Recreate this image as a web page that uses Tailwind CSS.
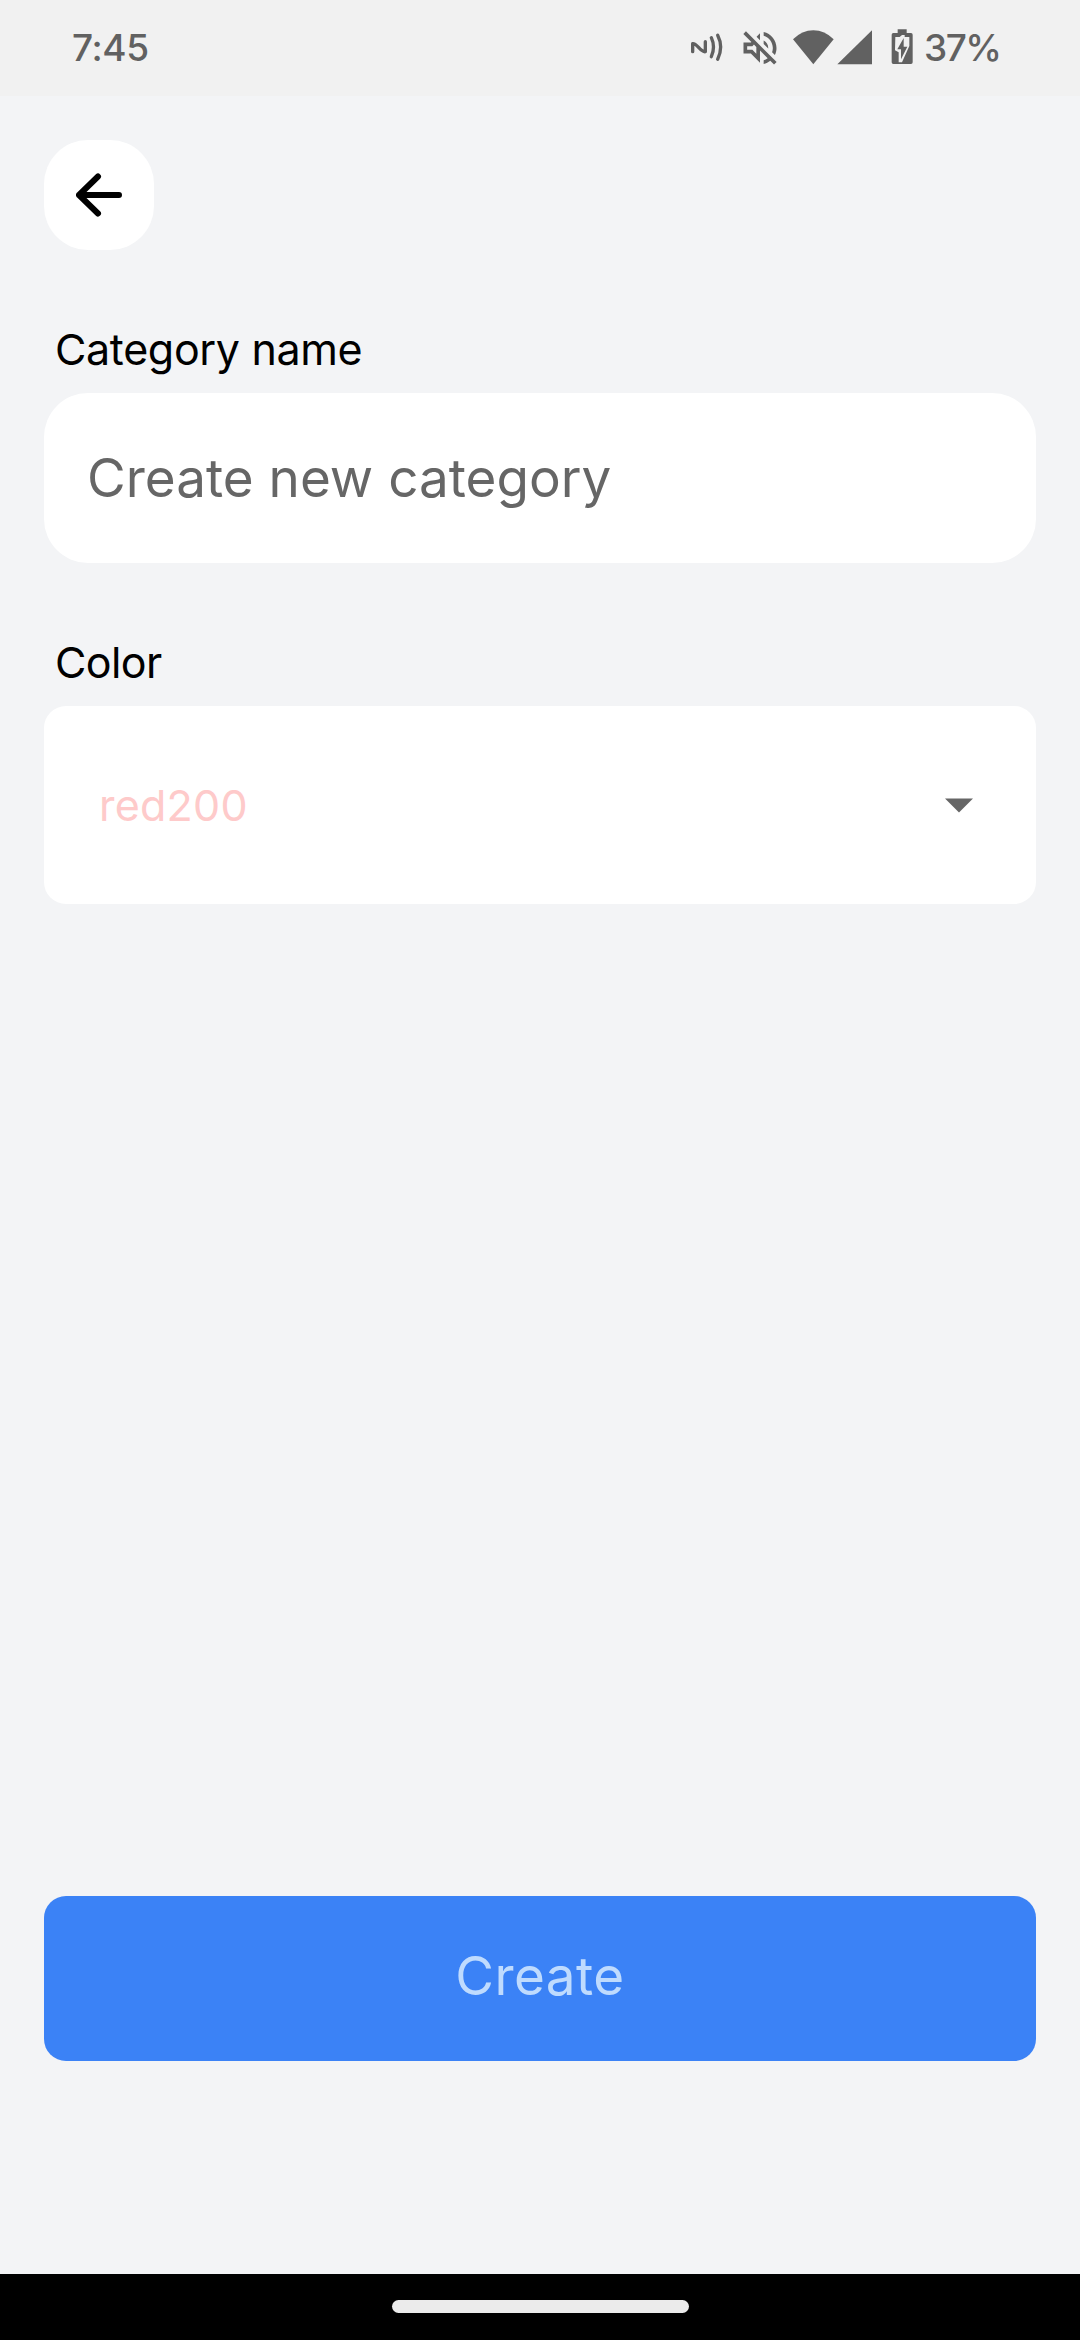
<!DOCTYPE html>
<html lang="en">
<head>
<meta charset="utf-8">
<title>New category</title>
<script src="https://cdn.jsdelivr.net/npm/@tailwindcss/browser@4"></script>
</head>
<body class="bg-[#f3f4f6]">
<div class="flex h-[2340px] w-[1080px] flex-col font-['Inter',sans-serif] text-black">
  <header class="flex h-[96px] shrink-0 items-start justify-between bg-[#f1f1f1] pr-[80px] pl-[72px] font-medium text-[#616161]">
    <span class="pt-[1px] text-[37px] leading-[94px] tracking-[-0.4px]">7:45</span>
    <div class="flex h-[96px] items-center">
      <svg class="mr-[11px] h-[44px] w-[38px]" viewBox="57 48 114 132" fill="none" stroke="#616161" stroke-width="10" stroke-linecap="round" stroke-linejoin="round">
        <path d="M68 125V101C80 98 92 128 106 125V95"/><path d="M124 83Q137 111 124 140M143 76Q161 111 143 148"/>
      </svg>
      <svg class="mr-[10px] h-[44px] w-[44px]" viewBox="0 0 24 24" fill="#616161"><path d="M4.34 2.93L2.93 4.34 7.29 8.7 7 9H3v6h4l5 5v-6.59l4.18 4.18c-.65.49-1.38.88-2.18 1.11v2.06c1.34-.3 2.57-.92 3.61-1.75l2.05 2.05 1.41-1.41L4.34 2.93zM10 15.17L7.83 13H5v-2h2.83l.88-.88L10 11.41v3.76zM19 12c0 .82-.15 1.61-.41 2.34l1.53 1.53c.56-1.17.88-2.48.88-3.87 0-4.28-2.99-7.86-7-8.77v2.06c2.89.86 5 3.54 5 6.71zm-7-8l-1.88 1.88L12 7.76zm4.5 8c0-1.77-1.02-3.29-2.5-4.03v1.79l2.48 2.48c.01-.08.02-.16.02-.24z"/></svg>
      <svg class="mr-[2px] h-[44px] w-[43px]" viewBox="366 48 129 132" fill="#616161"><path d="M430 163L369 88Q396 61 430 61T491 88Z"/></svg>
      <svg class="mr-[16px] h-[44px] w-[38px]" viewBox="501 48 114 132" fill="#616161"><path d="M502 163H606V61Z"/></svg>
      <svg class="mr-[11px] h-[44px] w-[22px]" viewBox="664 48 66 132" fill="#616161"><path d="M684 58H711V69H724Q729 69 729 74V157Q729 162 724 162H671Q666 162 666 157V74Q666 69 671 69H684Z"/><path fill="#f1f1f1" d="M677 81H690L697 75H705V81H719V108L697 157H687V127L676 121Z"/><path d="M702 84L683 118H694V148L713 110H702Z"/></svg>
      <span class="w-[76px] text-[37px] leading-[94px] tracking-[-1.5px] whitespace-nowrap">37%</span>
    </div>
  </header>
  <main class="flex flex-1 flex-col px-[44px] pt-[44px]">
    <button class="flex size-[110px] items-center justify-center rounded-[44px] bg-white" aria-label="Back">
      <svg class="h-[44px] w-[46px]" viewBox="0 0 46 44" fill="none" stroke="#000" stroke-width="6" stroke-linecap="round" stroke-linejoin="round"><path d="M22 3.5L3 22L22 40.500M3 22H43"/></svg>
    </button>
    <label class="mt-[70px] pl-[11px] text-[43px] leading-[58px] tracking-[-0.35px]">Category name</label>
    <div class="mt-[15px] flex h-[170px] items-center rounded-[44px] bg-white px-[43px] pt-[1px] text-[53px] text-[#666]">Create new category</div>
    <label class="mt-[70px] pl-[11px] text-[43px] leading-[58px] tracking-[-0.6px]">Color</label>
    <div class="mt-[15px] flex h-[198px] items-center justify-between rounded-[22px] bg-white pr-[63px] pl-[55px] text-[43px] tracking-[0.25px] text-[#fecaca]">
      <span>red200</span>
      <svg class="h-[15px] w-[28px]" viewBox="0 0 28 15" fill="#666"><path d="M0 0.500H28L14 14.500Z"/></svg>
    </div>
    <button class="mt-auto mb-[213px] flex h-[165px] items-center justify-center rounded-[22px] bg-[#3b82f6] pb-[3px] text-[53px] tracking-[0.45px] text-[#bfdbfe]">Create</button>
  </main>
  <footer class="flex h-[66px] shrink-0 justify-center bg-black pt-[26px]">
    <div class="h-[13px] w-[297px] rounded-full bg-[#ebebeb]"></div>
  </footer>
</div>
</body>
</html>
